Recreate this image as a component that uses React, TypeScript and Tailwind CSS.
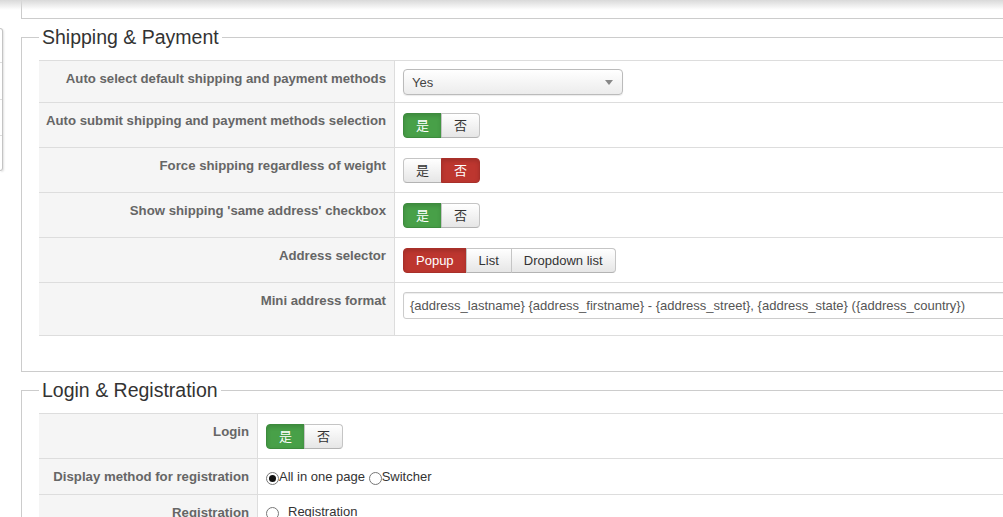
import React from 'react'

type Opt = { label: string; active?: 'green' | 'red' }

const font = { fontFamily: '"Liberation Sans", Arial, "Noto Sans CJK SC", sans-serif' }

const BtnGroup = ({ options }: { options: Opt[] }) => (
  <div className="flex">
    {options.map((o, i) => {
      const first = i === 0
      const last = i === options.length - 1
      const tone =
        o.active === 'green'
          ? 'bg-[#48a048] border-[#3d8b3d] text-white shadow-[inset_0_2px_4px_rgba(0,0,0,0.15)]'
          : o.active === 'red'
            ? 'bg-[#bd362f] border-[#a8302a] text-white shadow-[inset_0_2px_4px_rgba(0,0,0,0.15)]'
            : 'bg-gradient-to-b from-white to-[#e6e6e6] border-[#c5c5c5] border-b-[#b3b3b3] text-[#333]'
      return (
        <div
          key={o.label}
          className={`flex h-[25px] items-center border px-3 text-[13px] leading-[18px] ${tone} ${
            first ? 'rounded-l-[4px]' : '-ml-px'
          } ${last ? 'rounded-r-[4px]' : ''}`}
        >
          {o.label}
        </div>
      )
    })}
  </div>
)

const YesNo = ({ yes }: { yes: boolean }) => (
  <BtnGroup
    options={[
      { label: '是', active: yes ? 'green' : undefined },
      { label: '否', active: yes ? undefined : 'red' },
    ]}
  />
)

const Radio = ({ checked }: { checked?: boolean }) => (
  <span className="mt-[4px] inline-flex h-[13px] w-[13px] shrink-0 items-center justify-center rounded-full border border-[#777] bg-white">
    {checked && <span className="h-[7px] w-[7px] rounded-full bg-[#111]" />}
  </span>
)

const Row = ({
  label,
  labelWidth,
  height,
  pad,
  children,
}: {
  label: string
  labelWidth: string
  height: string
  pad: string
  children: React.ReactNode
}) => (
  <div className={`grid border-t border-[#ddd] ${labelWidth} ${height}`}>
    <div className="border-r border-[#ddd] bg-[#f5f5f5] pr-2 pt-[9px] text-right text-[13.2px] font-bold leading-[18px] text-[#666]">
      {label}
    </div>
    <div className={`pl-2 ${pad}`}>{children}</div>
  </div>
)

const Fieldset = ({ title, children }: { title: string; children: React.ReactNode }) => (
  <fieldset className="mt-[7px] border border-r-0 border-[#ccc] pl-[17px] pt-[12px] pb-[35px]">
    <legend className="px-[3px] text-[19.5px] leading-[22px] text-[#333]">{title}</legend>
    {children}
  </fieldset>
)

export default function App() {
  const ship = 'grid-cols-[356px_1fr]'
  const login = 'grid-cols-[219px_1fr]'

  return (
    <div className="relative flex h-[517px] w-[1003px] overflow-hidden bg-white" style={font}>
      {/* side menu edge */}
      <div className="mt-[28px] flex h-[143px] w-[3px] shrink-0 flex-col rounded-r-[4px] border border-l-0 border-[#c4c4c4] shadow-[1px_1px_2px_rgba(0,0,0,0.12)]">
        <div className="h-[34px] border-b border-[#ddd]" />
        <div className="h-[37px] border-b border-[#ddd]" />
        <div className="h-[36px] border-b border-[#ddd]" />
      </div>

      <div className="ml-[18px] w-[1010px] shrink-0">
        <div className="h-[19px] border-b border-l border-[#ccc]" />

        <Fieldset title="Shipping & Payment">
          <div className="border-b border-[#ddd]">
            <Row label="Auto select default shipping and payment methods" labelWidth={ship} height="h-[42px]" pad="pt-[8px]">
              <div className="relative flex h-[26px] w-[220px] items-center rounded-[4px] border border-[#bbb] bg-gradient-to-b from-white to-[#ececec] pl-[8px] pt-[2px] text-[13px] text-[#444] shadow-[0_1px_1px_rgba(0,0,0,0.08)]">
                Yes
                <span className="absolute right-[9px] top-[10px] h-0 w-0 border-x-[4px] border-t-[5px] border-x-transparent border-t-[#888]" />
              </div>
            </Row>
            <Row label="Auto submit shipping and payment methods selection" labelWidth={ship} height="h-[45px]" pad="pt-[10px]">
              <YesNo yes />
            </Row>
            <Row label="Force shipping regardless of weight" labelWidth={ship} height="h-[45px]" pad="pt-[10px]">
              <YesNo yes={false} />
            </Row>
            <Row label="Show shipping 'same address' checkbox" labelWidth={ship} height="h-[45px]" pad="pt-[10px]">
              <YesNo yes />
            </Row>
            <Row label="Address selector" labelWidth={ship} height="h-[45px]" pad="pt-[10px]">
              <BtnGroup options={[{ label: 'Popup', active: 'red' }, { label: 'List' }, { label: 'Dropdown list' }]} />
            </Row>
            <Row label="Mini address format" labelWidth={ship} height="h-[53px]" pad="pt-[9px]">
              <div className="flex h-[27px] items-center rounded-[3px] border border-[#ccc] px-[6px] text-[13px] text-[#555] shadow-[inset_0_1px_1px_rgba(0,0,0,0.075)]">
                {'{address_lastname} {address_firstname} - {address_street}, {address_state} ({address_country})'}
              </div>
            </Row>
          </div>
        </Fieldset>

        <Fieldset title="Login & Registration">
          <Row label="Login" labelWidth={login} height="h-[45px]" pad="pt-[10px]">
            <YesNo yes />
          </Row>
          <Row label="Display method for registration" labelWidth={login} height="h-[36px]" pad="pt-[9px]">
            <div className="flex text-[13px] leading-[18px] text-[#333]">
              <Radio checked />
              <span>All in one page&nbsp;</span>
              <Radio />
              <span>Switcher</span>
            </div>
          </Row>
          <Row label="Registration" labelWidth={login} height="h-[45px]" pad="pt-[8px]">
            <div className="flex text-[13px] leading-[18px] text-[#333]">
              <Radio />
              <span className="ml-[9px]">Registration</span>
            </div>
          </Row>
        </Fieldset>
      </div>

      {/* header shadow */}
      <div className="pointer-events-none absolute inset-x-0 top-0 h-[10px] bg-gradient-to-b from-[#d9d9d9] to-transparent" />
    </div>
  )
}
